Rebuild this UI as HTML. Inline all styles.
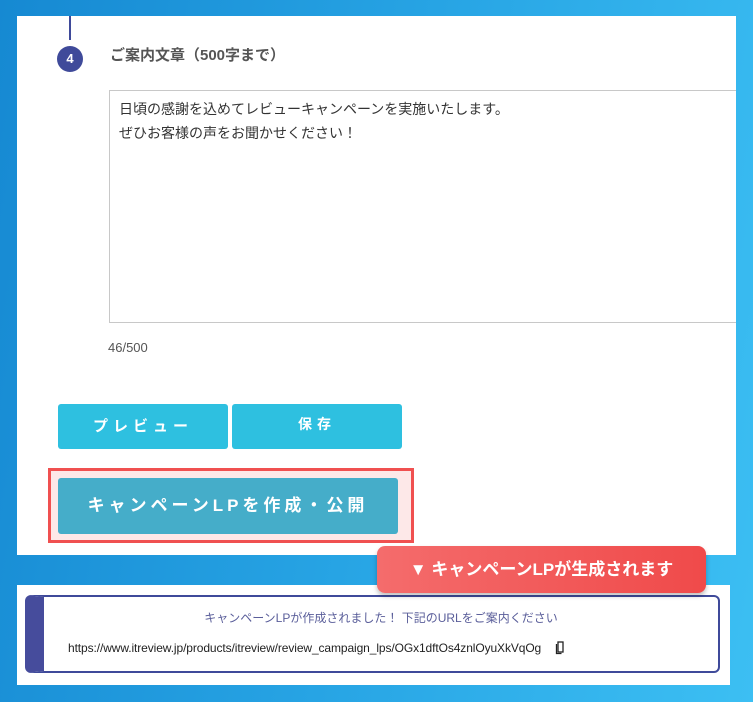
<!DOCTYPE html>
<html><head><meta charset="utf-8"><style>
*{margin:0;padding:0;box-sizing:border-box}
body{width:753px;height:702px;overflow:hidden;background:linear-gradient(100deg,#1689d2 0%,#27a4e4 50%,#3cbff3 100%);font-family:"Liberation Sans","Noto Sans CJK JP",sans-serif;position:relative}
.a{position:absolute}
</style></head><body>
<div class="a" style="left:17px;top:16px;width:719px;height:539px;background:#fff"></div>
<div class="a" style="left:69px;top:16px;width:2px;height:24px;background:#3f4a9a"></div>
<div class="a" style="left:57px;top:46px;width:26px;height:26px;border-radius:50%;background:#3f4a9a;color:#fff;font-size:13px;font-weight:bold;text-align:center;line-height:26px">4</div>
<div class="a" style="left:110px;top:46px;font-size:15px;font-weight:bold;color:#555;line-height:20px">ご案内文章（500字まで）</div>
<div class="a" style="left:109px;top:90px;width:627px;height:233px;border:1px solid #c8c8c8;border-right:none;padding:6px 9px;font-size:14px;line-height:24px;color:#333">日頃の感謝を込めてレビューキャンペーンを実施いたします。<br>ぜひお客様の声をお聞かせください！</div>
<div class="a" style="left:108px;top:340px;font-size:13px;color:#555">46/500</div>
<div class="a" style="left:58px;top:404px;width:170px;height:45px;background:#2ec0e0;border-radius:3px;color:#fff;font-weight:bold;font-size:15px;letter-spacing:5px;text-align:center;line-height:45px">プレビュー</div>
<div class="a" style="left:232px;top:404px;width:170px;height:45px;background:#2ec0e0;border-radius:3px;color:#fff;font-weight:bold;font-size:14px;letter-spacing:5px;text-align:center;line-height:40px">保存</div>
<div class="a" style="left:48px;top:468px;width:366px;height:75px;border:3px solid #f05050;background:#fde8e8"></div>
<div class="a" style="left:58px;top:478px;width:340px;height:56px;background:#45adc9;border-radius:3px;color:#fff;font-weight:bold;font-size:17px;letter-spacing:4px;text-align:center;line-height:56px">キャンペーンLPを作成・公開</div>
<div class="a" style="left:17px;top:585px;width:713px;height:100px;background:#fff"></div>
<div class="a" style="left:25px;top:595px;width:695px;height:78px;border:2px solid #3f4a9a;border-left:19px solid #464c9c;border-radius:6px"></div>
<div class="a" style="left:44px;top:609px;width:674px;text-align:center;font-size:12px;color:#5a5e9a">キャンペーンLPが作成されました！ 下記のURLをご案内ください</div>
<div class="a" style="left:68px;top:641px;font-size:12px;letter-spacing:-0.1px;color:#222">https://www.itreview.jp/products/itreview/review_campaign_lps/OGx1dftOs4znlOyuXkVqOg</div>
<svg class="a" style="left:555px;top:641px" width="10" height="14" viewBox="0 0 10 14"><rect x="3" y="1" width="5" height="10" fill="none" stroke="#222" stroke-width="1.3"/><path d="M1.5 3v9.5h5" fill="none" stroke="#222" stroke-width="1.3"/></svg>
<div class="a" style="left:377px;top:546px;width:329px;height:47px;border-radius:8px;background:linear-gradient(90deg,#f46c6c,#f04a4a);box-shadow:0 3px 5px rgba(0,0,0,.25);color:#fff;font-weight:bold;font-size:17px;text-align:center;line-height:47px">▼ キャンペーンLPが生成されます</div>
</body></html>
